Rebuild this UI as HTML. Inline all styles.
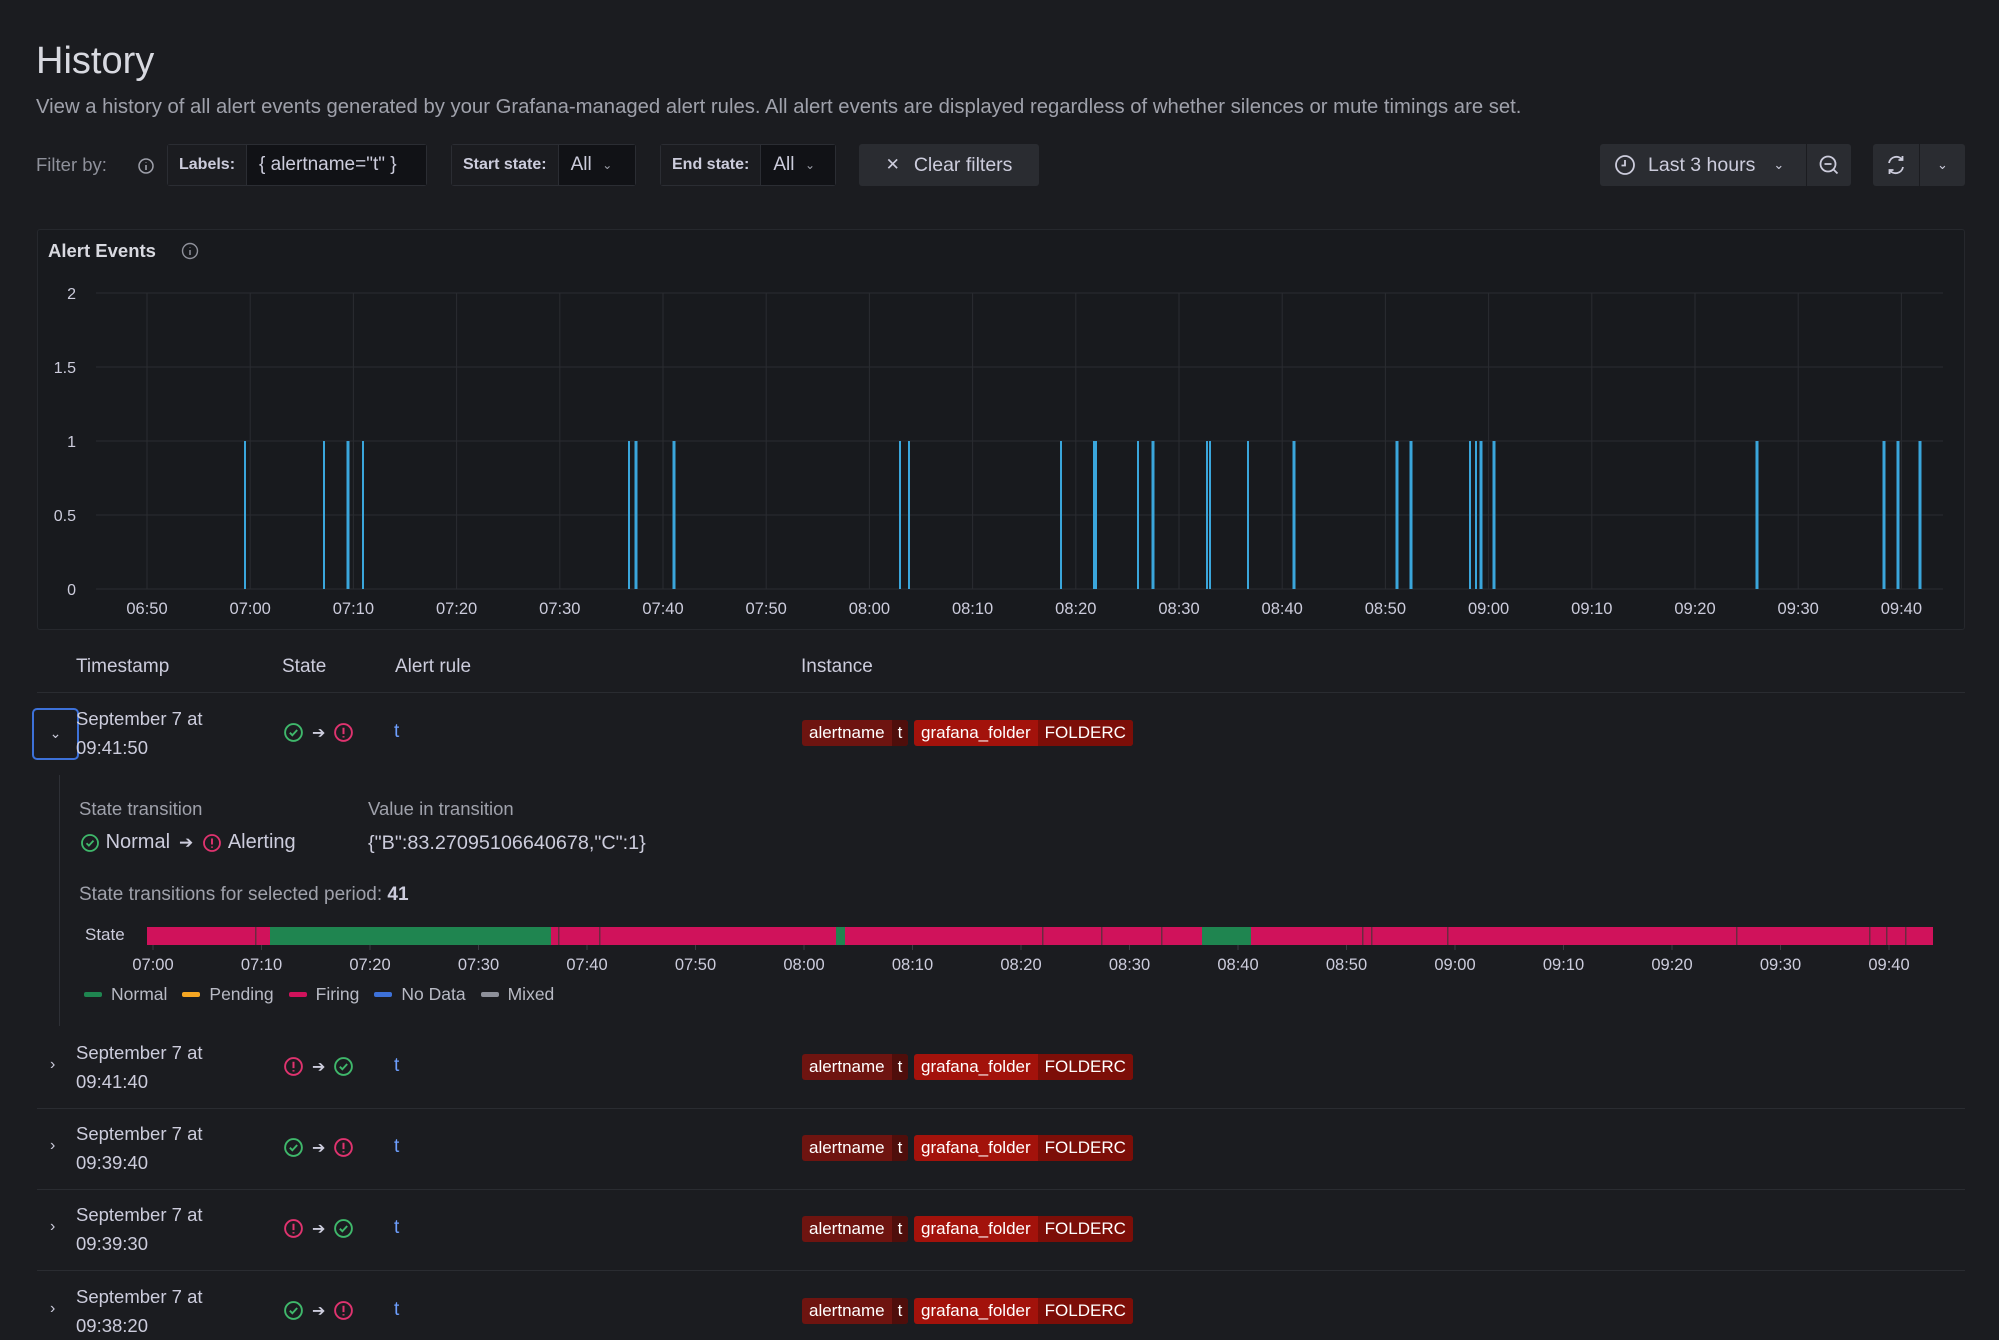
<!DOCTYPE html>
<html><head><meta charset="utf-8"><style>
*{box-sizing:border-box;margin:0;padding:0}
body{width:1999px;height:1339px;background:#1b1c20;color:#ccccdc;font-family:"Liberation Sans",sans-serif;position:relative;overflow:hidden}
.a{position:absolute;white-space:nowrap}
.box{position:absolute;height:42px;top:144px;border:1px solid #2b2d33;border-radius:3px;display:flex;align-items:center;font-size:17px}
.lab{background:#1b1c20;height:100%;display:flex;align-items:center;padding:0 11px;font-weight:bold;font-size:16px;border-right:1px solid #2b2d33}
.val{background:#111216;height:100%;display:flex;align-items:center;padding:0 12px;flex:1;font-size:19px}
.btn{position:absolute;top:144px;height:42px;background:#2a2c31;border-radius:3px;display:flex;align-items:center;justify-content:center;color:#ccccdc;font-size:19.5px}
.th{position:absolute;top:656px;font-size:19px;color:#ccccdc}
.ts{position:absolute;left:76px;font-size:18.5px;line-height:29px;color:#ccccdc}
.tag{position:absolute;height:26px;display:flex;font-size:17px;color:#fff;border-radius:3px;overflow:hidden}
.tag span{padding:0 7px;display:flex;align-items:center}
.sep{position:absolute;left:37px;width:1928px;height:1px;background:#2a2c31}
.chev{position:absolute;left:50px;color:#ccccdc;font-size:16px}
</style></head><body>
<div class="a" style="left:36px;top:40px;font-size:38px;color:#d8d9e0">History</div>
<div class="a" style="left:36px;top:96px;font-size:20.3px;color:#9fa1ab">View a history of all alert events generated by your Grafana-managed alert rules. All alert events are displayed regardless of whether silences or mute timings are set.</div>

<div class="a" style="left:36px;top:154px;font-size:18.5px;color:#8e909a">Filter by:</div>
<svg class="a" style="left:137px;top:157px" width="18" height="18" viewBox="0 0 18 18"><circle cx="9" cy="9" r="7" fill="none" stroke="#9fa1ab" stroke-width="1.5"/><path d="M9 8v5M9 5.5v.5" stroke="#9fa1ab" stroke-width="1.6"/></svg>
<div class="box" style="left:167px;width:260px"><div class="lab">Labels:</div><div class="val">{ alertname="t" }</div></div>
<div class="box" style="left:451px;width:185px"><div class="lab">Start state:</div><div class="val">All&nbsp;&nbsp;<span style="font-size:12px;color:#9fa1ab">⌄</span></div></div>
<div class="box" style="left:660px;width:176px"><div class="lab">End state:</div><div class="val">All&nbsp;&nbsp;<span style="font-size:12px;color:#9fa1ab">⌄</span></div></div>
<div class="btn" style="left:859px;width:180px"><span style="font-size:17px;margin-right:14px">✕</span>Clear filters</div>

<div class="btn" style="left:1600px;width:206px;justify-content:flex-start;padding-left:14px;border-radius:3px 0 0 3px">
<svg width="22" height="22" viewBox="0 0 22 22"><circle cx="11" cy="11" r="9" fill="none" stroke="#ccccdc" stroke-width="1.8"/><path d="M11 6v5.5H7.5" fill="none" stroke="#ccccdc" stroke-width="1.8"/></svg>
<span style="margin-left:12px;font-size:19.5px">Last 3 hours</span><span style="margin-left:18px;font-size:13px">⌄</span></div>
<div class="btn" style="left:1806px;width:45px;border-left:1px solid #1b1c20;border-radius:0 3px 3px 0"><svg width="22" height="22" viewBox="0 0 22 22"><circle cx="10" cy="10" r="7.5" fill="none" stroke="#ccccdc" stroke-width="1.8"/><path d="M6.5 10h7M15.5 15.5l4 4" stroke="#ccccdc" stroke-width="1.8"/></svg></div>
<div class="btn" style="left:1873px;width:46px;border-radius:3px 0 0 3px"><svg width="22" height="22" viewBox="0 0 22 22"><path d="M4 9a7.5 7.5 0 0 1 13.5-3M18 13a7.5 7.5 0 0 1-13.5 3M17.5 2v4h-4M4.5 20v-4h4" fill="none" stroke="#ccccdc" stroke-width="1.8"/></svg></div>
<div class="btn" style="left:1920px;width:45px;border-radius:0 3px 3px 0;font-size:13px">⌄</div>

<div class="a" style="left:37px;top:229px;width:1928px;height:401px;border:1px solid #26282d;border-radius:3px;background:#181a1e"></div>
<div class="a" style="left:48px;top:240px;font-size:18.5px;font-weight:bold;color:#d8d9e0">Alert Events</div>
<svg class="a" style="left:181px;top:242px" width="18" height="18" viewBox="0 0 18 18"><circle cx="9" cy="9" r="7.5" fill="none" stroke="#8e909a" stroke-width="1.4"/><path d="M9 8v5M9 5.5v.5" stroke="#8e909a" stroke-width="1.5"/></svg>
<svg class="a" style="left:0;top:0" width="1999" height="640" id="ch"></svg>

<div class="th" style="left:76px">Timestamp</div>
<div class="th" style="left:282px">State</div>
<div class="th" style="left:395px">Alert rule</div>
<div class="th" style="left:801px">Instance</div>
<div class="sep" style="top:692px"></div>

<div class="a" style="left:32px;top:708px;width:47px;height:52px;border:2px solid #3d71d9;border-radius:5px;text-align:center;line-height:46px;font-size:14px">⌄</div>
<div class="ts" style="top:704px">September 7 at<br>09:41:50</div>
<div class="a" style="left:59px;top:775px;width:1px;height:251px;background:#2e3036"></div>
<div class="a" style="left:79px;top:798px;font-size:18.5px;color:#9fa1ab">State transition</div>
<div class="a" style="left:368px;top:798px;font-size:18.5px;color:#9fa1ab">Value in transition</div>
<div class="a" style="left:80px;top:831px;font-size:20px" id="st"></div>
<div class="a" style="left:368px;top:832px;font-size:19.8px">{"B":83.27095106640678,"C":1}</div>
<div class="a" style="left:79px;top:884px;font-size:19px;color:#9fa1ab">State transitions for selected period: <b style="color:#ccccdc">41</b></div>
<div class="a" style="left:85px;top:925px;font-size:17px">State</div>
<svg class="a" style="left:0;top:920px" width="1999" height="60" id="bar"></svg>
<div class="a" style="left:84px;top:983px;font-size:17.5px;color:#b8bac4" id="leg"></div>

<div class="sep" style="top:1108px"></div>
<div class="sep" style="top:1189px"></div>
<div class="sep" style="top:1270px"></div>

<script>
const NS='http://www.w3.org/2000/svg';
function el(p,t,a){const e=document.createElementNS(NS,t);for(const k in a)e.setAttribute(k,a[k]);p.appendChild(e);return e;}
const ch=document.getElementById('ch');
const ys=[[293,'2'],[367,'1.5'],[441,'1'],[515,'0.5'],[589,'0']];
ys.forEach(([y,l])=>{el(ch,'line',{x1:96,x2:1943,y1:y,y2:y,stroke:'#2a2c31'});const t=el(ch,'text',{x:76,y:y+6,fill:'#ccccdc','font-size':16,'text-anchor':'end','font-family':'Liberation Sans'});t.textContent=l;});
const xl=['06:50','07:00','07:10','07:20','07:30','07:40','07:50','08:00','08:10','08:20','08:30','08:40','08:50','09:00','09:10','09:20','09:30','09:40'];
xl.forEach((l,i)=>{const x=147+i*103.2;el(ch,'line',{x1:x,x2:x,y1:293,y2:589,stroke:'#2a2c31'});const t=el(ch,'text',{x:x,y:614,fill:'#ccccdc','font-size':16.5,'text-anchor':'middle','font-family':'Liberation Sans'});t.textContent=l;});
const sp=[[245,2],[324,2],[348,3],[363,2],[629,2],[636,3],[674,3],[900,2],[909,2],[1061,2],[1094,2],[1096,2],[1138,2],[1153,3],[1207,2],[1210,2],[1248,2],[1294,3],[1397,3],[1411,3],[1470,2],[1476,2],[1481,3],[1494,3],[1757,3],[1884,3],[1898,3],[1920,3]];
sp.forEach(([x,w])=>el(ch,'rect',{x:x-w/2,y:441,width:w,height:148,fill:'#3aa6dc'}));
const b=document.getElementById('bar');
const P='#d0125b',G='#1f8550';
[[147,270,P],[270,551,G],[551,836,P],[836,845,G],[845,1202,P],[1202,1251,G],[1251,1933,P]].forEach(([a,c,f])=>el(b,'rect',{x:a,y:7,width:c-a,height:18,fill:f}));
[255,558,599,1042,1101,1161,1362,1371,1447,1736,1869,1886,1905].forEach(x=>el(b,'rect',{x:x,y:7,width:1.5,height:18,fill:'#6b2a40'}));
const bl=['07:00','07:10','07:20','07:30','07:40','07:50','08:00','08:10','08:20','08:30','08:40','08:50','09:00','09:10','09:20','09:30','09:40'];
bl.forEach((l,i)=>{const x=153+i*108.5;el(b,'line',{x1:x,x2:x,y1:25,y2:30,stroke:'#3a3c42'});const t=el(b,'text',{x:x,y:50,fill:'#ccccdc','font-size':16.5,'text-anchor':'middle','font-family':'Liberation Sans'});t.textContent=l;});
function ok(c){return `<svg width="${c}" height="${c}" viewBox="0 0 20 20" style="vertical-align:middle"><circle cx="10" cy="10" r="8" fill="none" stroke="#3fb86b" stroke-width="1.8"/><path d="M6.5 10.2l2.4 2.4 4.6-5" fill="none" stroke="#3fb86b" stroke-width="1.8"/></svg>`;}
function al(c){return `<svg width="${c}" height="${c}" viewBox="0 0 20 20" style="vertical-align:middle"><circle cx="10" cy="10" r="8" fill="none" stroke="#e0336f" stroke-width="1.8"/><path d="M10 5.5v6M10 13.5v1.3" stroke="#e0336f" stroke-width="1.9"/></svg>`;}
const arr='<span style="display:inline-block;margin:0 9px;font-size:17px;color:#ccccdc;vertical-align:middle">➔</span>';
document.getElementById('st').innerHTML=ok(20)+' <span style="vertical-align:middle">Normal</span>'+arr+al(20)+' <span style="vertical-align:middle">Alerting</span>';
document.getElementById('leg').innerHTML=[['#1f8550','Normal'],['#f5a623','Pending'],['#d0125b','Firing'],['#3d71d9','No Data'],['#8e909a','Mixed']].map(([c,l])=>`<span style="display:inline-block;width:18px;height:5px;border-radius:2px;background:${c};vertical-align:middle;margin-right:9px"></span><span style="margin-right:15px;vertical-align:middle">${l}</span>`).join('');
const rows=[[733,ok,al,'09:41:50',false],[1067,al,ok,'09:41:40',true],[1148,ok,al,'09:39:40',true],[1229,al,ok,'09:39:30',true],[1311,ok,al,'09:38:20',true]];
rows.forEach(([y,a,c,t,full])=>{
 let h='';
 if(full){h+=`<div class="ts" style="top:${y-29}px">September 7 at<br>${t}</div><div class="chev" style="top:${y-11}px">›</div>`;}
 h+=`<div class="a" style="left:283px;top:${y-11}px;display:flex;align-items:center">${a(21)}<span style="margin:0 8px;font-size:16px;color:#ccccdc">➔</span>${c(21)}</div>`;
 h+=`<div class="a" style="left:394px;top:${y-12}px;font-size:19px;color:#6e9fff">t</div>`;
 h+=`<div class="tag" style="left:802px;top:${y-13}px;background:#6e1410"><span>alertname</span><span style="background:#4f0e0b;padding:0 6px">t</span></div>`;
 h+=`<div class="tag" style="left:914px;top:${y-13}px;background:#a3120b"><span>grafana_folder</span><span style="background:#7c0e08">FOLDERC</span></div>`;
 document.body.insertAdjacentHTML('beforeend',h);
});
</script>
</body></html>
